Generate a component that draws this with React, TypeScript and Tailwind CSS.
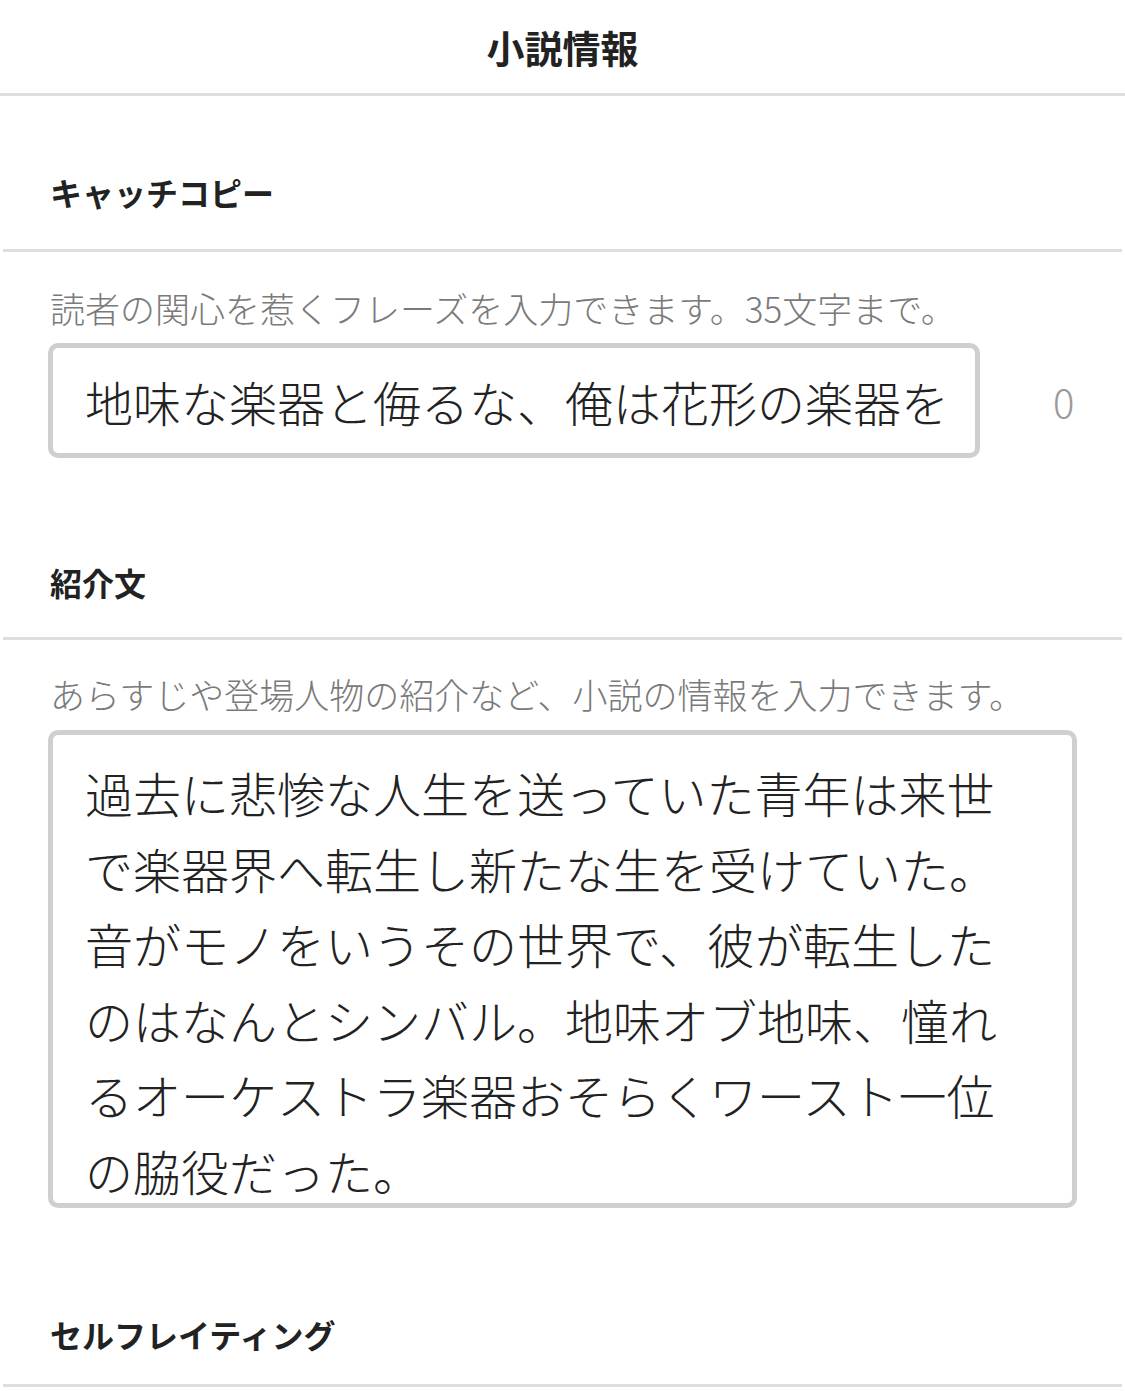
import React from "react";

const catchCopy = "地味な楽器と侮るな、俺は花形の楽器を";
const intro =
  "過去に悲惨な人生を送っていた青年は来世で楽器界へ転生し新たな生を受けていた。音がモノをいうその世界で、彼が転生したのはなんとシンバル。地味オブ地味、憧れるオーケストラ楽器おそらくワースト一位の脇役だった。";

function SectionLabel({ children, className }: { children: React.ReactNode; className: string }) {
  return (
    <>
      <div className={`pl-[50px] text-[32px] leading-[40px] font-bold text-[#222] ${className}`}>{children}</div>
      <div className="mx-[3px] h-[3px] bg-[#dedede]" />
    </>
  );
}

export default function App() {
  return (
    <div className="min-h-[1391px] w-[1125px] bg-white font-['Noto_Sans_CJK_JP','Noto_Sans',sans-serif] text-[#222]">
      {/* header */}
      <div className="flex h-[96px] items-center justify-center border-b-[3px] border-[#dedede]">
        <h1 className="text-[38px] leading-[40px] font-bold">小説情報</h1>
      </div>

      {/* catch copy */}
      <SectionLabel className="pt-[76px] pb-[37px]">キャッチコピー</SectionLabel>
      <p className="pt-[36px] pb-[15px] pl-[50px] text-[35px] leading-[40px] font-light text-[#7a7a7a]">
        読者の関心を惹くフレーズを入力できます。35文字まで。
      </p>
      <div className="flex items-center pl-[48px]">
        <div className="flex h-[115px] w-[932px] items-center overflow-hidden whitespace-nowrap rounded-[10px] border-[5px] border-[#cfcfcf] pl-[32px] text-[48px] leading-[60px] font-light">
          {catchCopy}
        </div>
        <span className="ml-[73px] text-[40px] leading-[40px] font-light text-[#9a9a9a]">0</span>
      </div>

      {/* introduction */}
      <SectionLabel className="pt-[104px] pb-[35px]">紹介文</SectionLabel>
      <p className="pt-[34px] pb-[16px] pl-[50px] text-[35px] leading-[40px] font-light text-[#7a7a7a]">
        あらすじや登場人物の紹介など、小説の情報を入力できます。
      </p>
      <div className="pl-[48px]">
        <div className="h-[478px] w-[1029px] overflow-hidden rounded-[10px] border-[5px] border-[#cfcfcf] pt-[20px] pr-[32px] pl-[32px] text-[48px] leading-[75.6px] font-light">
          {intro}
        </div>
      </div>

      {/* self rating */}
      <SectionLabel className="pt-[106px] pb-[30px]">セルフレイティング</SectionLabel>
    </div>
  );
}
